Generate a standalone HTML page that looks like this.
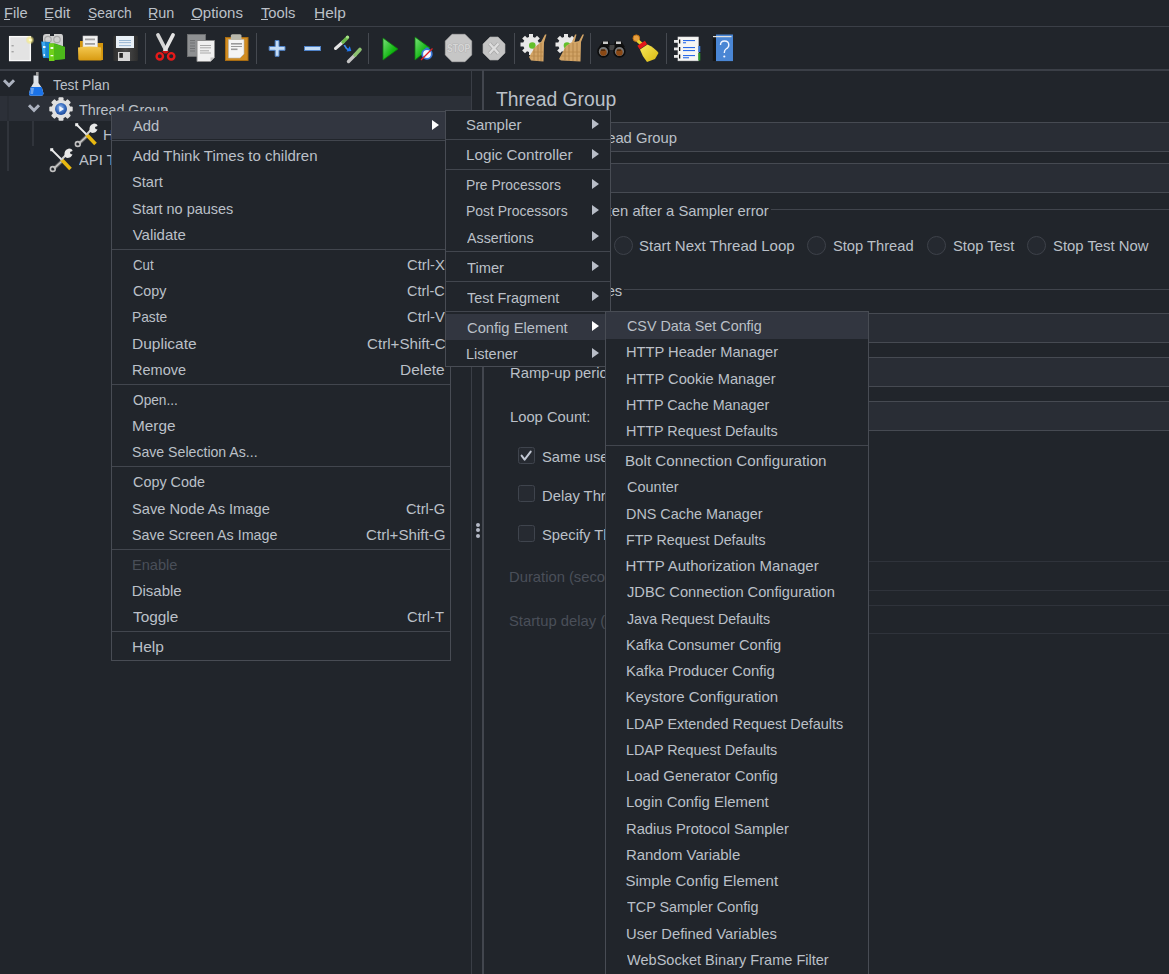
<!DOCTYPE html>
<html><head><meta charset="utf-8"><style>
html,body{margin:0;padding:0}
body{width:1169px;height:974px;overflow:hidden;position:relative;background:#21252b;font-family:"Liberation Sans",sans-serif;color:#bbc0c8}
.t{position:absolute;white-space:nowrap;transform-origin:0 0}
.r{position:absolute}
</style></head><body>
<div class="t" style="left:3.52px;top:4.00px;font-size:15px;line-height:17px;transform:scaleX(0.9783);">File</div><div class="r" style="left:4px;top:19px;width:6px;height:1.25px;background:#bbc0c8;"></div><div class="t" style="left:43.58px;top:4.00px;font-size:15px;line-height:17px;transform:scaleX(1.0160);">Edit</div><div class="r" style="left:45px;top:19px;width:7px;height:1.25px;background:#bbc0c8;"></div><div class="t" style="left:87.58px;top:4.00px;font-size:15px;line-height:17px;transform:scaleX(0.9217);">Search</div><div class="r" style="left:88px;top:19px;width:7px;height:1.25px;background:#bbc0c8;"></div><div class="t" style="left:148.04px;top:4.00px;font-size:15px;line-height:17px;transform:scaleX(0.9577);">Run</div><div class="r" style="left:149px;top:19px;width:7px;height:1.25px;background:#bbc0c8;"></div><div class="t" style="left:191.20px;top:4.00px;font-size:15px;line-height:17px;">Options</div><div class="r" style="left:191px;top:19px;width:9px;height:1.25px;background:#bbc0c8;"></div><div class="t" style="left:261.40px;top:4.00px;font-size:15px;line-height:17px;transform:scaleX(0.9829);">Tools</div><div class="r" style="left:261px;top:19px;width:7px;height:1.25px;background:#bbc0c8;"></div><div class="t" style="left:313.67px;top:4.00px;font-size:15px;line-height:17px;transform:scaleX(1.0300);">Help</div><div class="r" style="left:315px;top:19px;width:9px;height:1.25px;background:#bbc0c8;"></div><div class="r" style="left:0px;top:26px;width:1169px;height:1px;background:#3b3f47;"></div><svg class="r" style="left:0;top:28px" width="760" height="40" viewBox="0 28 760 40">
<defs>
<radialGradient id="glow"><stop offset="0" stop-color="#ffffff"/><stop offset="0.35" stop-color="#f8f0a0"/><stop offset="1" stop-color="#f0e060" stop-opacity="0"/></radialGradient>
<linearGradient id="fold" x1="0" y1="0" x2="0" y2="1"><stop offset="0" stop-color="#f4c850"/><stop offset="1" stop-color="#d89a10"/></linearGradient>
<linearGradient id="flop" x1="0" y1="0" x2="1" y2="0"><stop offset="0" stop-color="#2e2e2e"/><stop offset="0.5" stop-color="#4a4a4a"/><stop offset="1" stop-color="#2e2e2e"/></linearGradient>
<linearGradient id="grn" x1="0" y1="0" x2="1" y2="1"><stop offset="0" stop-color="#7ce07c"/><stop offset="0.6" stop-color="#14b814"/><stop offset="1" stop-color="#0a8a0a"/></linearGradient>
<linearGradient id="yel" x1="0" y1="0" x2="1" y2="1"><stop offset="0" stop-color="#f8e85a"/><stop offset="1" stop-color="#d8b810"/></linearGradient>
</defs>
<!-- 1 New -->
<rect x="9.6" y="36.6" width="20.8" height="24" fill="#e3e3e3" stroke="#fafafa" stroke-width="1.3"/>
<circle cx="30" cy="40" r="4.6" fill="url(#glow)"/>
<rect x="11.5" y="45.3" width="2.2" height="1" fill="#8a8a8a"/>
<rect x="11.5" y="51.3" width="2.2" height="1" fill="#8a8a8a"/>
<!-- 2 Templates -->
<path d="M43 45 L43 37 Q43 34 46 34 L50 34 L50 36 L54 36 L54 34 L61 34 Q63 34 63 37 L63 46 Z" fill="#cfcfcf"/>
<circle cx="48" cy="39.5" r="3.2" fill="none" stroke="#a8a8a8" stroke-width="1.2"/>
<circle cx="57" cy="39.5" r="3.2" fill="none" stroke="#a8a8a8" stroke-width="1.2"/>
<path d="M41 41.5 L50 42 L50.5 58.5 L43 57.5 Z" fill="#1a86d0"/>
<path d="M42 42 L45 42.3 L45.5 57.7 L43 57.5 Z" fill="#3aa8f0"/>
<rect x="43" y="46" width="2.5" height="2" fill="#e8f4ff"/><rect x="43.5" y="54" width="1.5" height="2" fill="#e8f4ff"/>
<path d="M49 43.5 L55 43.5 L65 47 L65 59 L55 60 L50 61 Z" fill="#2ea10e"/>
<path d="M55 44 L65 47 L65 59 L55 60 Z" fill="#4cb81a"/>
<rect x="49" y="43.5" width="5.5" height="17.5" fill="#6fd01a"/>
<rect x="50.5" y="47" width="2.8" height="2" fill="#f0ffe8"/>
<rect x="50.5" y="55" width="2.8" height="1.3" fill="#f0ffe8"/>
<!-- 3 Open -->
<path d="M80 41 L88 41 L90 43 L103 43 L103 60 L80 60 Z" fill="#d4960e"/>
<rect x="83" y="36" width="14.5" height="11.5" fill="#f2f2f2" stroke="#c8c8c8" stroke-width="0.6"/>
<rect x="85" y="38.5" width="10" height="1.8" fill="#a0a0a0"/><rect x="85" y="43" width="10" height="1.8" fill="#a0a0a0"/>
<path d="M78 47.5 Q90 45.5 101 47.5 L101.5 60.5 L80 60.5 Q78.5 60.5 78.3 59 Z" fill="url(#fold)"/>
<!-- 4 Save -->
<rect x="113.3" y="35.7" width="24.6" height="25.2" rx="1.2" fill="url(#flop)"/>
<rect x="116" y="36" width="18" height="12" fill="#e9f0f7"/>
<rect x="119" y="40" width="12" height="0.9" fill="#8fb0d0"/><rect x="119" y="42.2" width="12" height="0.9" fill="#8fb0d0"/><rect x="119" y="45.2" width="12" height="0.9" fill="#8fb0d0"/>
<rect x="118" y="52" width="12" height="9" fill="#d6d6d6"/>
<rect x="119.3" y="53" width="3.6" height="4.8" fill="#262626"/>
<!-- 5 Cut -->
<path d="M158 35 L166 50.5" stroke="#d4d4d4" stroke-width="3.8" stroke-linecap="round"/>
<path d="M173 35 L165 50.5" stroke="#e4e4e4" stroke-width="3.8" stroke-linecap="round"/>
<circle cx="159.8" cy="56.3" r="3.2" fill="none" stroke="#e41a1a" stroke-width="2.4"/>
<circle cx="171.2" cy="56.3" r="3.2" fill="none" stroke="#e41a1a" stroke-width="2.4"/>
<path d="M162 51 L169 51 L167 53.5 L164 53.5 Z" fill="#d41010"/>
<!-- 6 Copy -->
<rect x="187.5" y="34.5" width="18" height="22" fill="#8e9092" stroke="#6c6e70" stroke-width="1"/>
<rect x="190" y="40" width="5" height="1" fill="#707274"/><rect x="190" y="42.5" width="5" height="1" fill="#707274"/><rect x="190" y="45.5" width="5" height="1" fill="#707274"/><rect x="190" y="48" width="5" height="1" fill="#707274"/><rect x="190" y="50.5" width="5" height="1" fill="#707274"/>
<path d="M197 40.5 L214.5 40.5 L214.5 57.5 L210.5 61.5 L197 61.5 Z" fill="#f0f0f0" stroke="#8a8a8a" stroke-width="1"/>
<path d="M210.5 61.5 L210.5 57.5 L214.5 57.5 Z" fill="#c0c0c0"/>
<rect x="200" y="45" width="11" height="1" fill="#a8a8a8"/><rect x="200" y="47.3" width="11" height="1" fill="#a8a8a8"/><rect x="200" y="50.3" width="9" height="1" fill="#a8a8a8"/><rect x="200" y="52.5" width="11" height="1" fill="#a8a8a8"/>
<!-- 7 Paste -->
<rect x="225.5" y="37.5" width="22.5" height="23" fill="#d08c22" stroke="#a86c12" stroke-width="1"/>
<path d="M228.5 39.5 L244 39.5 L244 54 L240 58 L228.5 58 Z" fill="#f4f4f4" stroke="#b8b8b8" stroke-width="0.6"/>
<rect x="231" y="43" width="11" height="1.6" fill="#9a9a9a"/><rect x="231" y="46" width="11" height="1" fill="#9a9a9a"/><rect x="231" y="48.5" width="6.5" height="1.6" fill="#9a9a9a"/>
<rect x="230.8" y="34.3" width="10.7" height="5.5" rx="1.5" fill="#b8b8ac"/>
<!-- 8 Plus -->
<path d="M275.2 40.5 h3.8 v6 h6 v3.8 h-6 v6 h-3.8 v-6 h-6 v-3.8 h6 Z" fill="#c4dcf6" stroke="#4f82c8" stroke-width="1"/>
<!-- 9 Minus -->
<rect x="304.5" y="46.5" width="16" height="4" fill="#c4dcf6" stroke="#4f82c8" stroke-width="1"/>
<!-- 10 Toggle -->
<path d="M335.5 48.5 L343.5 41.5" stroke="#e4e4e4" stroke-width="3" stroke-linecap="round"/>
<path d="M343 42 L347.5 37.5" stroke="#6cb84c" stroke-width="3.4" stroke-linecap="round"/>
<circle cx="347.5" cy="37" r="1.6" fill="#a8e088"/>
<path d="M344.3 45 Q346 49 349.5 50.5" stroke="#3a86f0" stroke-width="1.8" fill="none"/>
<path d="M346.5 51.5 L351.3 51 L349.8 46.2 Z" fill="#1e78f4"/>
<path d="M348.5 61.5 L355 55" stroke="#c4c4c4" stroke-width="3.4" stroke-linecap="round"/>
<path d="M355 55 L360 49.5" stroke="#8cc070" stroke-width="3.6" stroke-linecap="round"/>
<!-- 11 Start -->
<path d="M383 38 L398 49 L383 60 Z" fill="url(#grn)" stroke="#0a800a" stroke-width="0.8"/>
<!-- 12 Start no pauses -->
<path d="M415 37 L430 48 L415 60 Z" fill="url(#grn)" stroke="#0a800a" stroke-width="0.8"/>
<circle cx="427" cy="54" r="4.8" fill="#f4f8ff" stroke="#3a78d8" stroke-width="1.8"/>
<rect x="425.5" y="47.5" width="3" height="2" fill="#3a78d8"/>
<path d="M421 60 L432.5 48.5" stroke="#e02020" stroke-width="1.3"/>
<!-- 13 Stop -->
<path d="M452 34.3 L465 34.3 L471.7 41 L471.7 55 L465 61.7 L452 61.7 L445.3 55 L445.3 41 Z" fill="#c6c6c6" stroke="#b4b4b4" stroke-width="0.6" stroke-linejoin="round"/>
<text transform="translate(458.6 52.3) scale(0.82 1)" font-family="Liberation Sans" font-weight="bold" font-size="10.5" fill="#d6d6d6" stroke="#a4a4a4" stroke-width="0.7" paint-order="stroke" text-anchor="middle">STOP</text>
<!-- 14 Shutdown -->
<path d="M490 37 L498 37 L505 44 L505 53 L498 60 L490 60 L483 53 L483 44 Z" fill="#c4c4c4" stroke="#b0b0b0" stroke-width="0.6"/>
<path d="M489.5 43.5 L498.5 53.5 M498.5 43.5 L489.5 53.5" stroke="#a8a8a8" stroke-width="4"/><path d="M489.5 43.5 L498.5 53.5 M498.5 43.5 L489.5 53.5" stroke="#dedede" stroke-width="2.4"/>
<!-- 15 Clear -->
<g fill="#e8e8e8">
<circle cx="531" cy="44.5" r="7.8"/>
<rect x="529" y="34" width="4" height="21"/><rect x="520.5" y="42.5" width="21" height="4"/>
<rect x="529" y="34" width="4" height="21" transform="rotate(45 531 44.5)"/><rect x="529" y="34" width="4" height="21" transform="rotate(-45 531 44.5)"/>
</g>
<circle cx="532.3" cy="45.5" r="3.3" fill="#62c02a"/>
<path d="M545 34.5 L546.5 34.5 L544 42.5 L543.5 61.5 L531 60.5 L529 57 L535 47 L541 42 Z" fill="#d2a466"/><path d="M534 48 L534 60 M538 45 L538 61 M541 43 L541 61" stroke="#a87a40" stroke-width="0.7"/>
<path d="M533 52 L543 52 M531 56 L543 56" stroke="#b8884a" stroke-width="0.8"/>
<!-- 16 Clear all -->
<g fill="#e8e8e8">
<circle cx="566" cy="44.5" r="7.8"/>
<rect x="564" y="34" width="4" height="21"/><rect x="555.5" y="42.5" width="21" height="4"/>
<rect x="564" y="34" width="4" height="21" transform="rotate(45 566 44.5)"/><rect x="564" y="34" width="4" height="21" transform="rotate(-45 566 44.5)"/>
</g>
<circle cx="567" cy="45.5" r="3.3" fill="#62c02a"/>
<path d="M559 59 L566 46 L572 42 L575 34.5 L576.5 34.5 L574.5 42 L579 41 L582.5 34.5 L584 34.5 L581 42 L580.5 61.5 L561 60.5 Z" fill="#d2a466"/><path d="M565 48 L565 60 M569 45 L569 61 M573 43 L573 61 M577 43 L577 61" stroke="#a87a40" stroke-width="0.7"/>
<path d="M563 52 L580 52 M561 56 L580 56" stroke="#b8884a" stroke-width="0.8"/>
<!-- 17 Binoculars -->
<path d="M599 47 L603 41 L609 41 L610 44.5 L614 44.5 L615 41 L621 41 L625 47 Z" fill="#111"/>
<rect x="603" y="41.5" width="5" height="2.5" fill="#c8c8c8"/><rect x="616" y="41.5" width="5" height="2.5" fill="#c8c8c8"/>
<rect x="609.5" y="45" width="5" height="5" fill="#444"/>
<circle cx="603.4" cy="51.5" r="5.4" fill="#777" stroke="#0c0c0c" stroke-width="1.6"/>
<circle cx="619.4" cy="51.5" r="5.4" fill="#777" stroke="#0c0c0c" stroke-width="1.6"/>
<circle cx="603.4" cy="52.6" r="3.3" fill="#8a4814"/><circle cx="619.4" cy="52.6" r="3.3" fill="#8a4814"/>
<rect x="601" y="49.5" width="4" height="1.2" fill="#3a2008"/><rect x="617" y="49.5" width="4" height="1.2" fill="#3a2008"/>
<!-- 18 Broom -->
<circle cx="636.3" cy="38.2" r="3.3" fill="#e8a040" stroke="#c07010" stroke-width="1"/>
<path d="M637.5 40.5 L642 44.5" stroke="#e8d030" stroke-width="3.2"/>
<path d="M638.5 47.5 L646 42.5" stroke="#e41818" stroke-width="4"/>
<path d="M640 49.5 L647.5 44.5 Q655 48 658.5 53 L655 59 L647 62 Q642 56 640 49.5 Z" fill="url(#yel)"/>
<!-- 19 Function helper -->
<rect x="678" y="37" width="20.3" height="23.8" fill="#f6f6f4" stroke="#e0e0e0" stroke-width="0.6"/>
<rect x="674" y="40" width="6" height="2.8" fill="#e8e8e8"/><rect x="674" y="47.5" width="6" height="2.8" fill="#e8e8e8"/><rect x="674" y="55" width="6" height="2.8" fill="#e8e8e8"/>
<rect x="679" y="39.5" width="1.3" height="4" fill="#111"/><rect x="679" y="47" width="1.3" height="4" fill="#111"/><rect x="679" y="54.5" width="1.3" height="4" fill="#111"/>
<g fill="#2a6ae8"><rect x="683" y="40" width="12" height="1.1"/><rect x="683" y="42.2" width="3" height="1.1"/>
<rect x="683" y="47" width="12" height="1.1"/><rect x="683" y="50" width="12" height="1.1"/>
<rect x="683" y="55" width="12" height="1.1"/><rect x="683" y="57.2" width="6" height="1.1"/></g>
<rect x="698.3" y="46" width="2" height="6" fill="#3a7ad8"/><rect x="698.3" y="53" width="2" height="7.5" fill="#2a9a2a"/>
<!-- 20 Help -->
<rect x="712.8" y="37" width="3.5" height="24" fill="#141414"/>
<rect x="716" y="34.5" width="17" height="26.6" fill="#4a86d4"/>
<rect x="713" y="36" width="18.5" height="1.2" fill="#e0e0e0"/>
<path d="M720.5 45 Q720.5 41 724.5 41 Q728.8 41 728.8 45 Q728.8 47.5 726 49 Q724.3 50 724.3 53" stroke="#f0f4ff" stroke-width="1.4" fill="none"/>
<circle cx="724.3" cy="56.5" r="1.1" fill="#f0f4ff"/>
</svg>
<div class="r" style="left:145px;top:33px;width:1px;height:31px;background:#454950;"></div><div class="r" style="left:256px;top:33px;width:1px;height:31px;background:#454950;"></div><div class="r" style="left:368px;top:33px;width:1px;height:31px;background:#454950;"></div><div class="r" style="left:514px;top:33px;width:1px;height:31px;background:#454950;"></div><div class="r" style="left:590px;top:33px;width:1px;height:31px;background:#454950;"></div><div class="r" style="left:666px;top:33px;width:1px;height:31px;background:#454950;"></div><div class="r" style="left:0px;top:69px;width:1169px;height:2px;background:#3b3f47;"></div><div class="r" style="left:0px;top:96px;width:471px;height:25px;background:#2c3038;"></div><div class="r" style="left:7px;top:96px;width:2px;height:25px;background:#282c33;"></div><div class="r" style="left:7px;top:121px;width:2px;height:50px;background:#30343b;"></div><div class="r" style="left:32px;top:121px;width:2px;height:25px;background:#30343b;"></div><svg class="r" style="left:0;top:68px" width="110" height="106" viewBox="0 68 110 106">
<defs>
<radialGradient id="gb" cx="0.45" cy="0.4" r="0.6"><stop offset="0" stop-color="#9ec0f0"/><stop offset="0.6" stop-color="#3a6ec0"/><stop offset="1" stop-color="#1e4a98"/></radialGradient>
</defs>
<path d="M4 80.3 L9 85.3 L14 80.3" stroke="#acb2bf" stroke-width="3" fill="none"/>
<path d="M29 105.3 L34 110.3 L39 105.3" stroke="#acb2bf" stroke-width="3" fill="none"/>
<!-- flask -->
<rect x="36" y="72" width="2.6" height="3.5" fill="#9a9a9a"/>
<path d="M33.5 75.5 L38.5 75.5 L38.5 83 L42 88 L43.5 93.5 Q43.5 95.8 41 95.8 L31 95.8 Q28.8 95.8 29 93.5 L30.5 88 L33.5 83 Z" fill="#dfe3e8"/>
<path d="M30.8 87 L41.7 87 L43.5 93.5 Q43.5 95.8 41 95.8 L31 95.8 Q28.8 95.8 29 93.5 Z" fill="#1a72e8"/>
<path d="M31 88 L34 88 L33 94 L30.5 94 Z" fill="#8fb8f0" opacity="0.7"/>
<!-- gear -->
<g fill="#e0e0e0">
<circle cx="61" cy="109" r="9.3"/>
<rect x="58.5" y="97.3" width="5" height="23.4" rx="1"/><rect x="49.3" y="106.5" width="23.4" height="5" rx="1"/>
<rect x="58.5" y="97.3" width="5" height="23.4" rx="1" transform="rotate(45 61 109)"/><rect x="58.5" y="97.3" width="5" height="23.4" rx="1" transform="rotate(-45 61 109)"/>
</g>
<circle cx="61" cy="109" r="6" fill="url(#gb)"/>
<path d="M59.3 106 L64 109 L59.3 112 Z" fill="#eef4ff"/>
<!-- wrench 1 -->
<defs><g id="wr">
<path d="M13 14 L5 21.5" stroke="#6a6a6a" stroke-width="3.4"/>
<path d="M13 14 L5 21.5" stroke="#c8c8c8" stroke-width="1.6"/>
<circle cx="3.8" cy="22" r="2.4" fill="none" stroke="#c0c0c0" stroke-width="1.6"/>
<path d="M2.5 2.5 L12.5 12.5" stroke="#ececec" stroke-width="1.8"/>
<rect x="1.2" y="1.2" width="3" height="3" fill="#f0f0f0"/>
<path d="M12.5 12.5 L21.5 22" stroke="#e8b810" stroke-width="3.6"/>
<path d="M12 13 L17 8" stroke="#d0d0d0" stroke-width="2.2"/>
<path d="M15.5 9.5 Q14.5 2.5 20 1.5 Q23.5 1.5 23.5 4 L21 5 L21.5 7 L23.5 7.5 Q22 11 18 11 Z" fill="#e8e8e8"/>
</g></defs>
<use href="#wr" x="74" y="122"/>
<use href="#wr" x="49" y="147"/>
</svg>
<div class="t" style="left:53.00px;top:76.00px;font-size:15px;line-height:17px;transform:scaleX(0.9180);">Test Plan</div><div class="t" style="left:79.00px;top:101.00px;font-size:15px;line-height:17px;transform:scaleX(0.9548);">Thread Group</div><div class="t" style="left:102.52px;top:126.00px;font-size:15px;line-height:17px;transform:scaleX(0.9850);">HTTP Request</div><div class="t" style="left:78.50px;top:151.00px;font-size:15px;line-height:17px;transform:scaleX(0.9850);">API Test</div><div class="r" style="left:471px;top:70px;width:1px;height:904px;background:#3a3e46;"></div><div class="r" style="left:482px;top:70px;width:2px;height:904px;background:#42464e;"></div><div class="r" style="left:475.5px;top:522.6px;width:4px;height:4px;border-radius:50%;background:#b4b9c6"></div><div class="r" style="left:475.5px;top:528px;width:4px;height:4px;border-radius:50%;background:#b4b9c6"></div><div class="r" style="left:475.5px;top:533.5px;width:4px;height:4px;border-radius:50%;background:#b4b9c6"></div><div class="t" style="left:496.40px;top:88.00px;font-size:19.5px;line-height:22px;transform:scaleX(0.9909);">Thread Group</div><div class="r" style="left:560px;top:122px;width:614px;height:30px;border:1px solid #464a52;box-sizing:border-box;background:#292d35"></div><div class="t" style="left:585.10px;top:129.00px;font-size:15px;line-height:17px;transform:scaleX(0.9850);">Thread Group</div><div class="r" style="left:560px;top:163px;width:614px;height:30px;border:1px solid #464a52;box-sizing:border-box;background:#292d35"></div><div class="t" style="left:509.94px;top:202.00px;font-size:15px;line-height:17px;transform:scaleX(0.9850);">Action to be taken after a Sampler error</div><div class="r" style="left:771px;top:209px;width:400px;height:1px;background:#40444c;"></div><div class="r" style="left:510px;top:235.6px;width:19px;height:19px;border-radius:50%;border:1px solid #3e424a;box-sizing:border-box;background:#252930"></div><div class="t" style="left:537.00px;top:237.00px;font-size:15px;line-height:17px;transform:scaleX(0.9850);">Continue</div><div class="r" style="left:614px;top:235.6px;width:19px;height:19px;border-radius:50%;border:1px solid #3e424a;box-sizing:border-box;background:#252930"></div><div class="t" style="left:639.00px;top:237.00px;font-size:15px;line-height:17px;">Start Next Thread Loop</div><div class="r" style="left:807px;top:235.6px;width:19px;height:19px;border-radius:50%;border:1px solid #3e424a;box-sizing:border-box;background:#252930"></div><div class="t" style="left:833.02px;top:237.00px;font-size:15px;line-height:17px;transform:scaleX(0.9790);">Stop Thread</div><div class="r" style="left:927px;top:235.6px;width:19px;height:19px;border-radius:50%;border:1px solid #3e424a;box-sizing:border-box;background:#252930"></div><div class="t" style="left:953.02px;top:237.00px;font-size:15px;line-height:17px;transform:scaleX(0.9836);">Stop Test</div><div class="r" style="left:1027px;top:235.6px;width:19px;height:19px;border-radius:50%;border:1px solid #3e424a;box-sizing:border-box;background:#252930"></div><div class="t" style="left:1053.01px;top:237.00px;font-size:15px;line-height:17px;transform:scaleX(0.9896);">Stop Test Now</div><div class="t" style="left:503.80px;top:282.00px;font-size:15px;line-height:17px;transform:scaleX(0.9850);">Thread Properties</div><div class="r" style="left:624px;top:289px;width:560px;height:1px;background:#40444c;"></div><div class="t" style="left:509.71px;top:319.00px;font-size:15px;line-height:17px;transform:scaleX(0.9850);">Number of Threads (users):</div><div class="r" style="left:700px;top:313px;width:474px;height:30px;border:1px solid #464a52;box-sizing:border-box;background:#292d35"></div><div class="t" style="left:509.71px;top:364.00px;font-size:15px;line-height:17px;transform:scaleX(0.9850);">Ramp-up period (seconds):</div><div class="r" style="left:700px;top:357px;width:474px;height:30px;border:1px solid #464a52;box-sizing:border-box;background:#292d35"></div><div class="t" style="left:509.72px;top:408.00px;font-size:15px;line-height:17px;transform:scaleX(0.9825);">Loop Count:</div><div class="r" style="left:700px;top:401px;width:474px;height:30px;border:1px solid #464a52;box-sizing:border-box;background:#292d35"></div><div class="r" style="left:518px;top:447px;width:17px;height:17px;border-radius:2.5px;border:1.25px solid #3f444d;box-sizing:border-box;background:#262a31"></div><svg class="r" style="left:518px;top:447px" width="17" height="17"><path d="M3.6 8.6 L6.6 12.6 L12.7 4.6" stroke="#c2c8d4" stroke-width="2" fill="none" stroke-linecap="round" stroke-linejoin="round"/></svg><div class="t" style="left:542.31px;top:448.00px;font-size:15px;line-height:17px;transform:scaleX(0.9850);">Same user on each iteration</div><div class="r" style="left:518px;top:485px;width:17px;height:17px;border-radius:2.5px;border:1.25px solid #3f444d;box-sizing:border-box;background:#262a31"></div><div class="t" style="left:542.31px;top:487.00px;font-size:15px;line-height:17px;transform:scaleX(0.9850);">Delay Thread creation until needed</div><div class="r" style="left:518px;top:524.5px;width:17px;height:17px;border-radius:2.5px;border:1.25px solid #3f444d;box-sizing:border-box;background:#262a31"></div><div class="t" style="left:542.31px;top:526.00px;font-size:15px;line-height:17px;transform:scaleX(0.9850);">Specify Thread lifetime</div><div class="t" style="left:509.31px;top:568.00px;font-size:15px;line-height:17px;color:#4a4f59;transform:scaleX(0.9850);">Duration (seconds):</div><div class="r" style="left:700px;top:561px;width:474px;height:30px;border:1px solid #2f333b;box-sizing:border-box;background:#21252b"></div><div class="t" style="left:509.31px;top:612.00px;font-size:15px;line-height:17px;color:#4a4f59;transform:scaleX(0.9850);">Startup delay (seconds):</div><div class="r" style="left:700px;top:605px;width:474px;height:29px;border:1px solid #2f333b;box-sizing:border-box;background:#21252b"></div><div class="r" style="left:111px;top:111px;width:340px;height:550px;background:#21252b;border:1px solid #484c54;box-sizing:border-box"></div><div class="r" style="left:112px;top:112.25px;width:338px;height:26.25px;background:#323640"></div><div class="t" style="left:132.70px;top:117.00px;font-size:15px;line-height:17px;transform:scaleX(0.9850);">Add</div><svg class="r" style="left:432px;top:119.88px" width="7" height="10"><path d="M0 0 L7 5 L0 10 Z" fill="#ffffff"/></svg><div class="r" style="left:112px;top:140px;width:338px;height:1px;background:#42464e;"></div><div class="t" style="left:132.70px;top:147.00px;font-size:15px;line-height:17px;">Add Think Times to children</div><div class="t" style="left:131.73px;top:173.00px;font-size:15px;line-height:17px;transform:scaleX(0.9742);">Start</div><div class="t" style="left:131.74px;top:200.00px;font-size:15px;line-height:17px;transform:scaleX(0.9635);">Start no pauses</div><div class="t" style="left:132.70px;top:226.00px;font-size:15px;line-height:17px;">Validate</div><div class="r" style="left:112px;top:249px;width:338px;height:1px;background:#42464e;"></div><div class="t" style="left:132.70px;top:256.00px;font-size:15px;line-height:17px;transform:scaleX(0.8833);">Cut</div><div class="t" style="left:407.00px;top:256.00px;font-size:15px;line-height:17px;transform:scaleX(0.9868);">Ctrl-X</div><div class="t" style="left:132.70px;top:282.00px;font-size:15px;line-height:17px;transform:scaleX(0.9543);">Copy</div><div class="t" style="left:407.00px;top:282.00px;font-size:15px;line-height:17px;transform:scaleX(0.9615);">Ctrl-C</div><div class="t" style="left:131.78px;top:308.00px;font-size:15px;line-height:17px;transform:scaleX(0.9189);">Paste</div><div class="t" style="left:407.00px;top:308.00px;font-size:15px;line-height:17px;transform:scaleX(0.9868);">Ctrl-V</div><div class="t" style="left:131.67px;top:335.00px;font-size:15px;line-height:17px;transform:scaleX(1.0344);">Duplicate</div><div class="t" style="left:366.80px;top:335.00px;font-size:15px;line-height:17px;transform:scaleX(1.0091);">Ctrl+Shift-C</div><div class="t" style="left:131.73px;top:361.00px;font-size:15px;line-height:17px;transform:scaleX(0.9673);">Remove</div><div class="t" style="left:400.27px;top:361.00px;font-size:15px;line-height:17px;transform:scaleX(1.0286);">Delete</div><div class="r" style="left:112px;top:384px;width:338px;height:1px;background:#42464e;"></div><div class="t" style="left:132.70px;top:391.00px;font-size:15px;line-height:17px;transform:scaleX(0.9125);">Open...</div><div class="t" style="left:131.68px;top:417.00px;font-size:15px;line-height:17px;transform:scaleX(1.0220);">Merge</div><div class="t" style="left:131.76px;top:443.00px;font-size:15px;line-height:17px;transform:scaleX(0.9417);">Save Selection As...</div><div class="r" style="left:112px;top:466px;width:338px;height:1px;background:#42464e;"></div><div class="t" style="left:132.70px;top:473.00px;font-size:15px;line-height:17px;transform:scaleX(0.9600);">Copy Code</div><div class="t" style="left:131.72px;top:500.00px;font-size:15px;line-height:17px;transform:scaleX(0.9779);">Save Node As Image</div><div class="t" style="left:406.30px;top:500.00px;font-size:15px;line-height:17px;transform:scaleX(0.9795);">Ctrl-G</div><div class="t" style="left:131.75px;top:526.00px;font-size:15px;line-height:17px;transform:scaleX(0.9530);">Save Screen As Image</div><div class="t" style="left:365.80px;top:526.00px;font-size:15px;line-height:17px;transform:scaleX(1.0090);">Ctrl+Shift-G</div><div class="r" style="left:112px;top:549px;width:338px;height:1px;background:#42464e;"></div><div class="t" style="left:131.73px;top:556.00px;font-size:15px;line-height:17px;color:#4a4f59;transform:scaleX(0.9733);">Enable</div><div class="t" style="left:131.70px;top:582.00px;font-size:15px;line-height:17px;">Disable</div><div class="t" style="left:132.70px;top:608.00px;font-size:15px;line-height:17px;transform:scaleX(1.0250);">Toggle</div><div class="t" style="left:407.00px;top:608.00px;font-size:15px;line-height:17px;transform:scaleX(0.9868);">Ctrl-T</div><div class="r" style="left:112px;top:631px;width:338px;height:1px;background:#42464e;"></div><div class="t" style="left:131.67px;top:638.00px;font-size:15px;line-height:17px;transform:scaleX(1.0333);">Help</div><div class="r" style="left:445px;top:110px;width:166px;height:257px;background:#21252b;border:1px solid #484c54;box-sizing:border-box"></div><div class="t" style="left:465.71px;top:116.00px;font-size:15px;line-height:17px;transform:scaleX(0.9927);">Sampler</div><svg class="r" style="left:591.5px;top:118.88px" width="7" height="10"><path d="M0 0 L7 5 L0 10 Z" fill="#b8bdc7"/></svg><div class="r" style="left:446px;top:139px;width:164px;height:1px;background:#42464e;"></div><div class="t" style="left:465.69px;top:146.00px;font-size:15px;line-height:17px;transform:scaleX(1.0144);">Logic Controller</div><svg class="r" style="left:591.5px;top:148.88px" width="7" height="10"><path d="M0 0 L7 5 L0 10 Z" fill="#b8bdc7"/></svg><div class="r" style="left:446px;top:169px;width:164px;height:1px;background:#42464e;"></div><div class="t" style="left:465.78px;top:176.00px;font-size:15px;line-height:17px;transform:scaleX(0.9248);">Pre Processors</div><svg class="r" style="left:591.5px;top:178.88px" width="7" height="10"><path d="M0 0 L7 5 L0 10 Z" fill="#b8bdc7"/></svg><div class="t" style="left:465.77px;top:202.00px;font-size:15px;line-height:17px;transform:scaleX(0.9306);">Post Processors</div><svg class="r" style="left:591.5px;top:205.12px" width="7" height="10"><path d="M0 0 L7 5 L0 10 Z" fill="#b8bdc7"/></svg><div class="t" style="left:466.70px;top:229.00px;font-size:15px;line-height:17px;transform:scaleX(0.9500);">Assertions</div><svg class="r" style="left:591.5px;top:231.38px" width="7" height="10"><path d="M0 0 L7 5 L0 10 Z" fill="#b8bdc7"/></svg><div class="r" style="left:446px;top:251px;width:164px;height:1px;background:#42464e;"></div><div class="t" style="left:466.70px;top:259.00px;font-size:15px;line-height:17px;transform:scaleX(0.9789);">Timer</div><svg class="r" style="left:591.5px;top:261.38px" width="7" height="10"><path d="M0 0 L7 5 L0 10 Z" fill="#b8bdc7"/></svg><div class="r" style="left:446px;top:281px;width:164px;height:1px;background:#42464e;"></div><div class="t" style="left:466.70px;top:289.00px;font-size:15px;line-height:17px;transform:scaleX(0.9615);">Test Fragment</div><svg class="r" style="left:591.5px;top:291.38px" width="7" height="10"><path d="M0 0 L7 5 L0 10 Z" fill="#b8bdc7"/></svg><div class="r" style="left:446px;top:311px;width:164px;height:1px;background:#42464e;"></div><div class="r" style="left:446px;top:313.75px;width:164px;height:26.25px;background:#323640"></div><div class="t" style="left:466.70px;top:319.00px;font-size:15px;line-height:17px;transform:scaleX(0.9816);">Config Element</div><svg class="r" style="left:591.5px;top:321.38px" width="7" height="10"><path d="M0 0 L7 5 L0 10 Z" fill="#ffffff"/></svg><div class="t" style="left:465.73px;top:345.00px;font-size:15px;line-height:17px;transform:scaleX(0.9673);">Listener</div><svg class="r" style="left:591.5px;top:347.62px" width="7" height="10"><path d="M0 0 L7 5 L0 10 Z" fill="#b8bdc7"/></svg><div class="r" style="left:605px;top:311px;width:264px;height:790px;background:#21252b;border:1px solid #484c54;box-sizing:border-box"></div><div class="r" style="left:606px;top:312.25px;width:262px;height:26.25px;background:#323640"></div><div class="t" style="left:626.50px;top:317.00px;font-size:15px;line-height:17px;transform:scaleX(0.9564);">CSV Data Set Config</div><div class="t" style="left:625.52px;top:343.00px;font-size:15px;line-height:17px;transform:scaleX(0.9774);">HTTP Header Manager</div><div class="t" style="left:625.52px;top:370.00px;font-size:15px;line-height:17px;transform:scaleX(0.9770);">HTTP Cookie Manager</div><div class="t" style="left:625.54px;top:396.00px;font-size:15px;line-height:17px;transform:scaleX(0.9564);">HTTP Cache Manager</div><div class="t" style="left:625.54px;top:422.00px;font-size:15px;line-height:17px;transform:scaleX(0.9592);">HTTP Request Defaults</div><div class="r" style="left:606px;top:445px;width:262px;height:1px;background:#42464e;"></div><div class="t" style="left:625.49px;top:452.00px;font-size:15px;line-height:17px;transform:scaleX(1.0111);">Bolt Connection Configuration</div><div class="t" style="left:626.50px;top:478.00px;font-size:15px;line-height:17px;transform:scaleX(0.9660);">Counter</div><div class="t" style="left:625.54px;top:505.00px;font-size:15px;line-height:17px;transform:scaleX(0.9585);">DNS Cache Manager</div><div class="t" style="left:625.55px;top:531.00px;font-size:15px;line-height:17px;transform:scaleX(0.9473);">FTP Request Defaults</div><div class="t" style="left:625.50px;top:557.00px;font-size:15px;line-height:17px;">HTTP Authorization Manager</div><div class="t" style="left:626.50px;top:583.00px;font-size:15px;line-height:17px;transform:scaleX(0.9774);">JDBC Connection Configuration</div><div class="t" style="left:626.50px;top:610.00px;font-size:15px;line-height:17px;transform:scaleX(0.9483);">Java Request Defaults</div><div class="t" style="left:625.53px;top:636.00px;font-size:15px;line-height:17px;transform:scaleX(0.9747);">Kafka Consumer Config</div><div class="t" style="left:625.51px;top:662.00px;font-size:15px;line-height:17px;transform:scaleX(0.9859);">Kafka Producer Config</div><div class="t" style="left:625.50px;top:688.00px;font-size:15px;line-height:17px;">Keystore Configuration</div><div class="t" style="left:625.54px;top:715.00px;font-size:15px;line-height:17px;transform:scaleX(0.9627);">LDAP Extended Request Defaults</div><div class="t" style="left:625.54px;top:741.00px;font-size:15px;line-height:17px;transform:scaleX(0.9567);">LDAP Request Defaults</div><div class="t" style="left:625.51px;top:767.00px;font-size:15px;line-height:17px;transform:scaleX(0.9947);">Load Generator Config</div><div class="t" style="left:625.50px;top:793.00px;font-size:15px;line-height:17px;transform:scaleX(0.9951);">Login Config Element</div><div class="t" style="left:625.52px;top:820.00px;font-size:15px;line-height:17px;transform:scaleX(0.9818);">Radius Protocol Sampler</div><div class="t" style="left:625.51px;top:846.00px;font-size:15px;line-height:17px;transform:scaleX(0.9947);">Random Variable</div><div class="t" style="left:625.50px;top:872.00px;font-size:15px;line-height:17px;">Simple Config Element</div><div class="t" style="left:626.50px;top:898.00px;font-size:15px;line-height:17px;transform:scaleX(0.9569);">TCP Sampler Config</div><div class="t" style="left:625.52px;top:925.00px;font-size:15px;line-height:17px;transform:scaleX(0.9849);">User Defined Variables</div><div class="t" style="left:626.50px;top:951.00px;font-size:15px;line-height:17px;transform:scaleX(0.9692);">WebSocket Binary Frame Filter</div><div class="t" style="left:626.50px;top:977.00px;font-size:15px;line-height:17px;transform:scaleX(0.9850);">WebSocket Close</div>
</body></html>
